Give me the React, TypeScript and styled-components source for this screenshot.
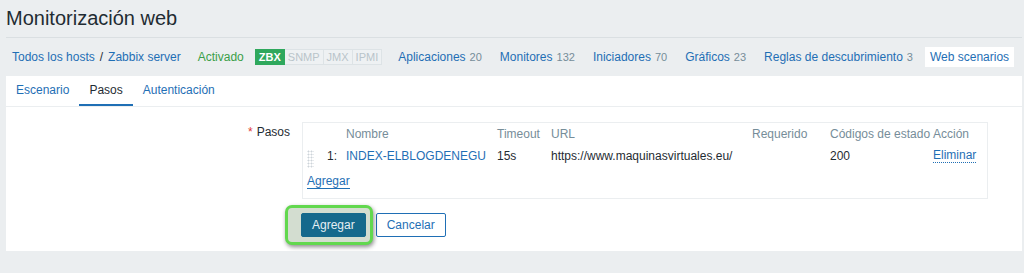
import React from "react";
import styled, { createGlobalStyle } from "styled-components";

const GlobalStyle = createGlobalStyle`
  body {
    margin: 0;
    background: #ebeef0;
    font-family: "Liberation Sans", Arial, sans-serif;
    font-size: 12px;
    color: #1f2c33;
  }
`;

const BLUE = "#1f6fb5";

const Header = styled.header`
  margin: 0 2px 0 6px;
  height: 37px;
  border-bottom: 1px solid #dadfe2;
  display: flex;
  align-items: center;
`;

const Title = styled.h1`
  margin: 0;
  font-size: 20px;
  font-weight: normal;
  color: #1f2c33;
`;

const Nav = styled.nav`
  height: 38px;
  display: flex;
  align-items: center;
  padding-left: 12px;
  white-space: nowrap;
`;

const NavLink = styled.a`
  color: ${BLUE};
  text-decoration: none;
`;

const Crumb = styled.span`
  display: flex;
  align-items: center;
  margin-right: 17px;
`;

const Slash = styled.span`
  margin: 0 5px;
  color: #1f2c33;
`;

const Status = styled.span`
  color: #3a9f48;
  margin-right: 11px;
`;

const Badges = styled.span`
  display: flex;
  margin-right: 16px;
`;

const Badge = styled.span<{ $on?: boolean }>`
  height: 16px;
  line-height: 14px;
  box-sizing: border-box;
  padding: 0 3px;
  font-size: 11px;
  font-weight: ${(p) => (p.$on ? "bold" : "normal")};
  color: ${(p) => (p.$on ? "#fff" : "#b9c4ca")};
  background: ${(p) => (p.$on ? "#2fa85d" : "#eef1f3")};
  border: 1px solid ${(p) => (p.$on ? "#2fa85d" : "#dde3e6")};
  border-left-width: ${(p) => (p.$on ? "1px" : "0")};
`;

const NavItem = styled.span`
  margin-right: 18px;
`;

const Count = styled.span`
  color: #768d99;
  margin-left: 4px;
  font-size: 11px;
`;

const CurrentTab = styled.span`
  margin-left: -6px;
  background: #fff;
  color: ${BLUE};
  padding: 0 5px;
  height: 20px;
  line-height: 20px;
`;

const Panel = styled.main`
  margin: 0 2px 0 6px;
  background: #fff;
  padding-bottom: 14px;
`;

const TabBar = styled.div`
  display: flex;
  border-bottom: 1px solid #ebeef0;
`;

const Tab = styled.span<{ $active?: boolean }>`
  height: 30px;
  box-sizing: border-box;
  line-height: 29px;
  padding: 0 10px;
  color: ${(p) => (p.$active ? "#1f2c33" : BLUE)};
  border-bottom: 2px solid ${(p) => (p.$active ? BLUE : "transparent")};
`;

const FormRow = styled.div`
  display: grid;
  grid-template-columns: 284px 686px;
  column-gap: 12px;
  padding-top: 15px;
`;

const Label = styled.label`
  text-align: right;
  line-height: 20px;
`;

const Req = styled.span`
  color: #e13b35;
  margin-right: 4px;
`;

const StepsBox = styled.div`
  border: 1px solid #ebeef0;
  padding: 1px 0 6px 3px;
`;

const StepsGrid = styled.div`
  display: grid;
  grid-template-columns: 18px 22px 151px 54px 201px 78px 103px auto;
  grid-auto-rows: 20px;
  row-gap: 2px;
  align-items: center;
`;

const Head = styled.span`
  color: #768d99;
`;

const Handle = styled.span`
  width: 7px;
  height: 18px;
  margin: 6px 0 0 1px;
  background-image: radial-gradient(circle, #cdd4d9 0.9px, transparent 1.1px);
  background-size: 3px 3px;
`;

const Num = styled.span`
  text-align: right;
  padding-right: 9px;
`;

const Link = styled.a<{ $dotted?: boolean }>`
  color: ${BLUE};
  text-decoration: none;
  justify-self: start;
  border-bottom: 1px ${(p) => (p.$dotted ? "dotted" : "solid")} ${BLUE};
  line-height: 13px;
`;

const StepName = styled.span`
  color: ${BLUE};
`;

const AddRow = styled.div`
  margin-top: 6px;
  height: 20px;
  display: flex;
  align-items: center;
  padding-left: 1px;
`;

const Actions = styled.div`
  display: flex;
  gap: 10px;
  padding: 14px 0 0 295px;
`;

const Highlight = styled.span`
  position: relative;
  z-index: 0;
  display: inline-flex;
  &::before {
    content: "";
    position: absolute;
    left: -16px;
    right: -7px;
    top: -8px;
    bottom: -8px;
    z-index: -1;
    background: #d3ddd0;
    border: 3px solid #62d84e;
    border-radius: 7px;
    box-shadow: 1px 2px 4px rgba(0, 0, 0, 0.45);
  }
`;

const Button = styled.button<{ $primary?: boolean }>`
  height: 24px;
  padding: 0 10px;
  font-family: "Liberation Sans", Arial, sans-serif;
  font-size: 12px;
  border-radius: 2px;
  border: 1px solid ${(p) => (p.$primary ? "#15698c" : BLUE)};
  background: ${(p) => (p.$primary ? "#15698c" : "#fff")};
  color: ${(p) => (p.$primary ? "#e4eef3" : BLUE)};
`;

const apps = [
  ["Aplicaciones", "20"],
  ["Monitores", "132"],
  ["Iniciadores", "70"],
  ["Gráficos", "23"],
  ["Reglas de descubrimiento", "3"],
];

export default function App() {
  return (
    <>
      <GlobalStyle />
      <Header>
        <Title>Monitorización web</Title>
      </Header>
      <Nav>
        <Crumb>
          <NavLink>Todos los hosts</NavLink>
          <Slash>/</Slash>
          <NavLink>Zabbix server</NavLink>
        </Crumb>
        <Status>Activado</Status>
        <Badges>
          <Badge $on>ZBX</Badge>
          <Badge>SNMP</Badge>
          <Badge>JMX</Badge>
          <Badge>IPMI</Badge>
        </Badges>
        {apps.map(([name, n]) => (
          <NavItem key={name}>
            <NavLink>{name}</NavLink>
            <Count>{n}</Count>
          </NavItem>
        ))}
        <CurrentTab>Web scenarios</CurrentTab>
      </Nav>
      <Panel>
        <TabBar>
          <Tab>Escenario</Tab>
          <Tab $active>Pasos</Tab>
          <Tab>Autenticación</Tab>
        </TabBar>
        <FormRow>
          <Label>
            <Req>*</Req>Pasos
          </Label>
          <StepsBox>
            <StepsGrid>
              <span />
              <span />
              <Head>Nombre</Head>
              <Head>Timeout</Head>
              <Head>URL</Head>
              <Head>Requerido</Head>
              <Head>Códigos de estado</Head>
              <Head>Acción</Head>
              <Handle />
              <Num>1:</Num>
              <StepName>INDEX-ELBLOGDENEGU</StepName>
              <span>15s</span>
              <span>https://www.maquinasvirtuales.eu/</span>
              <span />
              <span>200</span>
              <Link $dotted>Eliminar</Link>
            </StepsGrid>
            <AddRow>
              <Link>Agregar</Link>
            </AddRow>
          </StepsBox>
        </FormRow>
        <Actions>
          <Highlight>
            <Button $primary>Agregar</Button>
          </Highlight>
          <Button>Cancelar</Button>
        </Actions>
      </Panel>
    </>
  );
}
